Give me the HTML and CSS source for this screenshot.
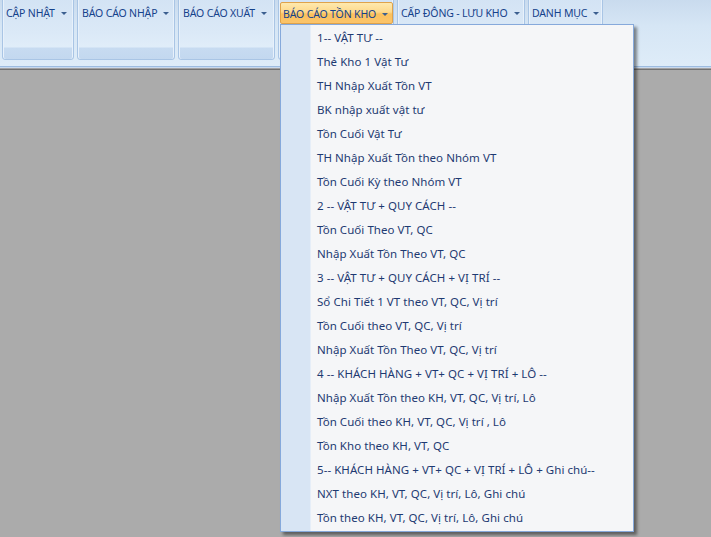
FILE: index.html
```html
<!DOCTYPE html>
<html>
<head>
<meta charset="utf-8">
<link rel="stylesheet" href="styles.css">
</head>
<body>
<div class="ribbon">
  <div class="group g1"><div class="btn">CẬP NHẬT<span class="arrow"></span></div></div>
  <div class="group g2"><div class="btn">BÁO CÁO NHẬP<span class="arrow"></span></div></div>
  <div class="group g3"><div class="btn">BÁO CÁO XUẤT<span class="arrow"></span></div></div>
  <div class="group g4"></div>
  <div class="group g5"><div class="btn">CẤP ĐÔNG - LƯU KHO<span class="arrow"></span></div></div>
  <div class="group g6"><div class="btn">DANH MỤC<span class="arrow"></span></div></div>
</div>
<div class="active-btn">BÁO CÁO TỒN KHO<span class="arrow"></span></div>
<div class="menu">
  <div class="side"></div>
  <ul class="items">
    <li>1-- VẬT TƯ --</li>
    <li>Thẻ Kho 1 Vật Tư</li>
    <li>TH Nhập Xuất Tồn VT</li>
    <li>BK nhập xuất vật tư</li>
    <li>Tồn Cuối Vật Tư</li>
    <li>TH Nhập Xuất Tồn theo Nhóm VT</li>
    <li>Tồn Cuối Kỳ theo Nhóm VT</li>
    <li>2 -- VẬT TƯ + QUY CÁCH --</li>
    <li>Tồn Cuối Theo VT, QC</li>
    <li>Nhập Xuất Tồn Theo VT, QC</li>
    <li>3 -- VẬT TƯ + QUY CÁCH + VỊ TRÍ --</li>
    <li>Sổ Chi Tiết 1 VT theo VT, QC, Vị trí</li>
    <li>Tồn Cuối theo VT, QC, Vị trí</li>
    <li>Nhập Xuất Tồn Theo VT, QC, Vị trí</li>
    <li>4 -- KHÁCH HÀNG + VT+ QC + VỊ TRÍ + LÔ --</li>
    <li>Nhập Xuất Tồn theo KH, VT, QC, Vị trí, Lô</li>
    <li>Tồn Cuối theo KH, VT, QC, Vị trí , Lô</li>
    <li>Tồn Kho theo KH, VT, QC</li>
    <li>5-- KHÁCH HÀNG + VT+ QC + VỊ TRÍ + LÔ + Ghi chú--</li>
    <li>NXT theo KH, VT, QC, Vị trí, Lô, Ghi chú</li>
    <li>Tồn theo KH, VT, QC, Vị trí, Lô, Ghi chú</li>
  </ul>
</div>
</body>
</html>
```

FILE: styles.css
```css
html, body {
  margin: 0;
  padding: 0;
}
body {
  background: #ababab;
  font-family: "Noto Sans", "Liberation Sans", sans-serif;
  font-size: 11px;
  color: #1e3a72;
  width: 711px;
  height: 537px;
  overflow: hidden;
  position: relative;
}
.ribbon {
  height: 66px;
  display: flex;
  gap: 3px;
  padding-left: 2px;
  background: linear-gradient(#c9dbee 0%, #d6e6f5 40%, #deecf8 100%);
  border-bottom: 1px solid #9dbce0;
  box-shadow: 0 1px 0 #c7d9ee, 0 2px 0 #a2a2a2, 0 3px 0 #727272;
  align-items: flex-start;
}
.group {
  height: 63px;
  margin-top: -3px;
  box-sizing: border-box;
  border: 1px solid #a9c5e5;
  border-radius: 0 0 3px 3px;
  background: linear-gradient(#d3e3f4 0px, #dbe9f7 35px, #e0edf9 49px, #c7dbf1 50px, #c3d8ef 100%);
  box-shadow: inset 1px 0 0 #e8f1fb, inset -1px 0 0 #e8f1fb;
}
.g1 { width: 72px; }
.g2 { width: 98px; }
.g3 { width: 97px; }
.g4 { width: 116px; }
.g5 { width: 128px; }
.g6 { width: 75px; }
.btn {
  padding: 8px 0 0 3px;
  display: flex;
  align-items: center;
  white-space: nowrap;
  height: 13px;
  color: #15428b;
  font-size: 10.5px;
  letter-spacing: -0.15px;
}
.g2 .btn, .g3 .btn { padding-left: 4px; }
.arrow {
  display: inline-block;
  width: 0;
  height: 0;
  border-left: 3px solid transparent;
  border-right: 3px solid transparent;
  border-top: 3px solid #3b5f8f;
  margin-left: 6px;
  margin-top: 1px;
}
.active-btn {
  position: absolute;
  left: 280px;
  top: 2px;
  width: 113px;
  height: 22px;
  box-sizing: border-box;
  border: 1px solid #dfa34b;
  border-radius: 2px;
  background: linear-gradient(#fee9ae 0%, #fdd98c 45%, #fbc15c 55%, #fbc46b 100%);
  display: flex;
  align-items: center;
  padding: 1px 0 0 2px;
  white-space: nowrap;
  color: #15428b;
  font-size: 10.5px;
  letter-spacing: -0.15px;
}
.active-btn .arrow { margin-left: 6px; }
.menu {
  position: absolute;
  left: 280px;
  top: 24px;
  width: 354px;
  height: 508px;
  box-sizing: border-box;
  border: 1px solid #86a9db;
  background: #f5f6f8;
  box-shadow: 3px 3px 3px rgba(0,0,0,0.45);
  display: flex;
}
.side {
  width: 29px;
  background: #d8e5f4;
  border-right: 1px solid #e6eef8;
}
.items {
  list-style: none;
  margin: 0;
  padding: 1px 0 1px 6px;
  font-size: 11.5px;
  letter-spacing: 0.05px;
}
.items li {
  height: 24px;
  line-height: 24px;
  white-space: nowrap;
}
```
